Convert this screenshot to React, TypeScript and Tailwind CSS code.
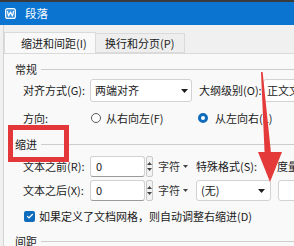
import React from "react";

const font = { fontFamily: '"Noto Sans CJK SC", "Noto Sans", sans-serif' };

function Caret() {
  return (
    <svg width="7" height="4" viewBox="0 0 7 4" className="shrink-0">
      <path d="M0 0h7L3.5 4z" fill="#1f1f1f" />
    </svg>
  );
}

function Spinner() {
  return (
    <div className="ml-[1px] flex h-[21px] w-[10px] flex-col items-center justify-center gap-[3px] rounded-[2px] border border-[#c9c9c9] bg-[#f3f3f3]">
      <svg width="5" height="3" viewBox="0 0 5 3">
        <path d="M0 3h5L2.5 0z" fill="#444" />
      </svg>
      <svg width="5" height="3" viewBox="0 0 5 3">
        <path d="M0 0h5L2.5 3z" fill="#444" />
      </svg>
    </div>
  );
}

function Section({ title }: { title: string }) {
  return (
    <div className="flex h-[16px] items-center pl-[11px]">
      <span>{title}</span>
      <div className="ml-[4px] h-px flex-1 bg-[#cdcdcd]" />
    </div>
  );
}

function NumberRow({ label, last }: { label: string; last?: boolean }) {
  return (
    <div className="flex h-[21px] items-center pl-[19px]">
      <span className="w-[67px] shrink-0 whitespace-nowrap">{label}</span>
      <div className="flex h-[21px] w-[55px] shrink-0 items-center rounded-[3px] border border-[#d2d2d2] border-b-[#9a9a9a] bg-white pl-[5px]">
        0
      </div>
      <Spinner />
      <div className="ml-[5px] flex w-[38px] shrink-0 items-center gap-[3px] text-[#333]">
        字符
        <svg width="5" height="3" viewBox="0 0 5 3">
          <path d="M0 0h5L2.5 3z" fill="#444" />
        </svg>
      </div>
      {last ? (
        <>
          <div className="flex h-[21px] w-[75px] shrink-0 items-center justify-between rounded-[3px] border border-[#d2d2d2] bg-white pl-[4px] pr-[5px]">
            <span>(无)</span>
            <Caret />
          </div>
          <div className="ml-[7px] h-[21px] w-[40px] shrink-0 rounded-[3px] border border-[#d2d2d2] bg-white" />
        </>
      ) : (
        <>
          <span className="w-[81px] shrink-0 whitespace-nowrap">特殊格式(S):</span>
          <span className="whitespace-nowrap">度量值</span>
        </>
      )}
    </div>
  );
}

export default function App() {
  return (
    <div
      className="relative h-[246px] w-[294px] overflow-hidden bg-[#f0f0f0] text-[11px] leading-none text-[#1b1b1b]"
      style={font}
    >
      <div className="h-[2px] bg-[#3a3a3a]" />
      <div className="flex h-[23px] items-center bg-[#0b74d1] pl-[5px] text-white">
        <svg width="11" height="11" viewBox="0 0 11 11" className="shrink-0">
          <rect x="0.6" y="0.6" width="9.8" height="9.8" rx="2" fill="#3b93e0" stroke="#fff" strokeWidth="1.1" />
          <path d="M2.3 3l1.3 5 1.9-4 1.9 4 1.3-5" fill="none" stroke="#fff" strokeWidth="1.1" strokeLinejoin="round" />
        </svg>
        <span className="ml-[9px] text-[11.5px]">段落</span>
      </div>

      <div className="ml-[3px] border-l border-[#d4d4d4]">
        <div className="flex h-[28px] items-end">
          <div className="flex h-[21px] w-[92px] items-center border border-b-0 border-[#dadada] bg-[#f9f9f9] pl-[16px]">
            缩进和间距(I)
          </div>
          <div className="flex h-[20px] w-[89px] items-center border-y border-r border-[#dadada] bg-[#eeeeee] pl-[9px]">
            换行和分页(P)
          </div>
        </div>

        <div className="h-[200px] border-t border-[#dadada] bg-[#f9f9f9] pt-[7px]">
          <Section title="常规" />

          <div className="mt-[2px] flex h-[23px] items-center pl-[19px]">
            <span className="w-[67px] shrink-0 whitespace-nowrap">对齐方式(G):</span>
            <div className="flex h-[23px] w-[102px] shrink-0 items-center justify-between rounded-[3px] border border-[#d2d2d2] bg-white pl-[4px] pr-[3px]">
              <span>两端对齐</span>
              <Caret />
            </div>
            <span className="ml-[7px] w-[64px] shrink-0 whitespace-nowrap">大纲级别(O):</span>
            <div className="flex h-[23px] w-[60px] shrink-0 items-center whitespace-nowrap rounded-[3px] border border-[#d2d2d2] bg-white pl-[3px]">
              正文文本
            </div>
          </div>

          <div className="mt-[7px] flex h-[18px] items-center pl-[19px]">
            <span className="w-[68px] shrink-0">方向:</span>
            <div className="flex w-[107px] shrink-0 items-center">
              <span className="h-[10px] w-[10px] shrink-0 rounded-full border border-[#5a5a5a] bg-white" />
              <span className="ml-[5px] whitespace-nowrap">从右向左(F)</span>
            </div>
            <span className="h-[10px] w-[10px] shrink-0 rounded-full border-[3px] border-[#0f6cbd] bg-white" />
            <span className="ml-[7px] whitespace-nowrap">从左向右(L)</span>
          </div>

          <div className="mt-[9px]">
            <Section title="缩进" />
          </div>

          <div className="mt-[4px]">
            <NumberRow label="文本之前(R):" />
          </div>
          <div className="mt-[3px]">
            <NumberRow label="文本之后(X):" last />
          </div>

          <div className="mt-[7px] flex h-[16px] items-center pl-[20px]">
            <span className="flex h-[11px] w-[11px] shrink-0 items-center justify-center rounded-[2px] bg-[#0f6cbd]">
              <svg width="8" height="8" viewBox="0 0 8 8">
                <path d="M1.2 4.2l1.8 1.8 3.8-4" fill="none" stroke="#fff" strokeWidth="1.2" />
              </svg>
            </span>
            <span className="ml-[4px] whitespace-nowrap">如果定义了文档网格，则自动调整右缩进(D)</span>
          </div>

          <div className="mt-[9px]">
            <Section title="间距" />
          </div>
        </div>
      </div>

      {/* annotation overlays */}
      <div className="absolute left-[8px] top-[125px] h-[37px] w-[61px] border-[5px] border-[#e4373a]" />
      <svg className="absolute left-0 top-0" width="294" height="246" viewBox="0 0 294 246">
        <path d="M261 72h1.6l8.4 81h-6.4z" fill="#e53a3a" />
        <path d="M258 152h24l-12 30z" fill="#e53a3a" />
      </svg>
    </div>
  );
}
